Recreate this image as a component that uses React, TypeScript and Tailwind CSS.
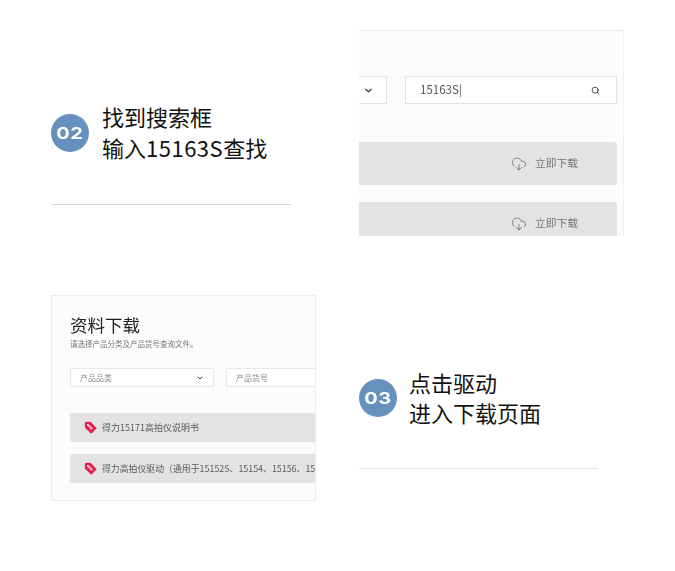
import type { ReactNode } from "react";
import { ChevronDown, CloudDownload, Search } from "lucide-react";

const cjk = "font-['Noto_Sans_CJK_SC','Noto_Sans',sans-serif]";

function StepBadge({ num }: { num: string }) {
  return (
    <div className="flex h-[38px] w-[38px] shrink-0 items-center justify-center rounded-full bg-[#6690bd]">
      <span className="scale-x-[1.25] font-['Inter',sans-serif] text-[16px] leading-none font-bold tracking-[0.3px] text-white">
        {num}
      </span>
    </div>
  );
}

function StepText({ num, lines, gap, leading }: { num: string; lines: ReactNode[]; gap: string; leading: string }) {
  return (
    <div className={`flex items-center ${gap}`}>
      <StepBadge num={num} />
      <div className={`pb-[2px] text-[22px] text-[#111] ${leading}`}>
        {lines.map((line, i) => (
          <div key={i}>{line}</div>
        ))}
      </div>
    </div>
  );
}

function TagIcon() {
  return (
    <svg viewBox="0 0 14 14" className="h-[13px] w-[13px] shrink-0">
      <path
        d="M1.6 2.6 Q1.6 1.6 2.6 1.6 L6.8 1.6 L12.4 7.4 Q12.8 7.8 12.4 8.2 L8.2 12.4 Q7.8 12.8 7.4 12.4 L1.6 6.8 Z"
        fill="#e0234f"
        stroke="#e0234f"
        strokeWidth="1.4"
        strokeLinejoin="round"
      />
      <path d="M4 5.4 L5.6 3.8 L9.8 7.8 L7.8 9.8 Z" fill="#f2a3b5" />
      <circle cx="4.2" cy="4.2" r="1" fill="#ffffff" />
    </svg>
  );
}

function DownloadAction() {
  return (
    <div className="flex items-center gap-[8px] text-[#777]">
      <CloudDownload className="h-[16px] w-[16px]" strokeWidth={1.4} />
      <span className="text-[10.75px]">立即下载</span>
    </div>
  );
}

function SearchPanel() {
  return (
    <div className="flex h-[206px] w-[265px] flex-col overflow-hidden border-t border-r border-[#efefef] bg-[#fcfcfc] pt-[45px] pr-[6px] blur-[0.3px]">
      <div className="flex h-[28px] shrink-0 gap-[18px]">
        <div className="flex w-[28px] items-center justify-end border-y border-r border-[#e3e3e3] bg-white pr-[12px]">
          <ChevronDown className="h-[11px] w-[11px] text-[#333]" strokeWidth={3} />
        </div>
        <div className="flex flex-1 items-center justify-between border border-[#e0e0e0] bg-white pr-[16px] pl-[14px]">
          <span className="text-[11.5px] text-[#555]">15163S|</span>
          <Search className="h-[9px] w-[9px] text-[#444]" strokeWidth={2.5} />
        </div>
      </div>
      <div className="mt-[38px] flex h-[43px] shrink-0 items-center justify-end rounded-r-[3px] bg-[#e3e3e3] pr-[39px]">
        <DownloadAction />
      </div>
      <div className="mt-[17px] flex h-[43px] shrink-0 items-center justify-end rounded-r-[3px] bg-[#e3e3e3] pr-[39px]">
        <DownloadAction />
      </div>
    </div>
  );
}

function DownloadPanel() {
  return (
    <div className="h-[206px] w-[265px] overflow-hidden border border-[#efecec] bg-[#fdfbfc] pt-[17px] pl-[18px] blur-[0.3px]">
      <div className="text-[17.5px] leading-[24px] text-[#222]">资料下载</div>
      <div className="mt-[1px] text-[7.5px] leading-[11px] text-[#777]">请选择产品分类及产品货号查询文件。</div>
      <div className="mt-[19px] flex h-[19px] w-[300px] gap-[12px] text-[8px] text-[#888]">
        <div className="flex w-[144px] shrink-0 items-center justify-between border border-[#e8e8e8] bg-white px-[9px]">
          <span>产品品类</span>
          <ChevronDown className="h-[8px] w-[8px] text-[#333]" strokeWidth={3} />
        </div>
        <div className="flex flex-1 items-center border border-[#e8e8e8] bg-white pl-[9px]">
          <span>产品货号</span>
        </div>
      </div>
      <div className="mt-[26px] flex h-[29px] w-[300px] items-center gap-[5px] rounded-l-[2px] bg-[#e3e3e3] pl-[14px] text-[9px] whitespace-nowrap text-[#5c5c5c]">
        <TagIcon />
        <span>得力15171高拍仪说明书</span>
      </div>
      <div className="mt-[12px] flex h-[29px] w-[300px] items-center gap-[5px] rounded-l-[2px] bg-[#e3e3e3] pl-[14px] text-[8.9px] whitespace-nowrap text-[#5c5c5c]">
        <TagIcon />
        <span>得力高拍仪驱动（通用于15152S、15154、15156、15158）</span>
      </div>
    </div>
  );
}

export default function App() {
  return (
    <div className={`h-[571px] w-[675px] overflow-hidden bg-white pt-[30px] pl-[51px] ${cjk}`}>
      <div className="flex gap-[68px]">
        <div className="w-[240px]">
          <div className="pt-[71px]">
            <StepText
              num="02"
              leading="leading-[31px]"
              lines={[
                "找到搜索框",
                <>
                  输入<span className="tracking-[0.5px]">15163S</span>查找
                </>,
              ]}
              gap="gap-[13px]"
            />
          </div>
          <div className="mt-[39px] h-px bg-[#d9d3ce]" />
        </div>
        <SearchPanel />
      </div>
      <div className="mt-[59px] flex gap-[43px]">
        <DownloadPanel />
        <div className="w-[239px]">
          <div className="pt-[72px]">
            <StepText num="03" leading="leading-[30px]" lines={["点击驱动", "进入下载页面"]} gap="gap-[12px]" />
          </div>
          <div className="mt-[39px] h-px bg-[#e8e2dc]" />
        </div>
      </div>
    </div>
  );
}
